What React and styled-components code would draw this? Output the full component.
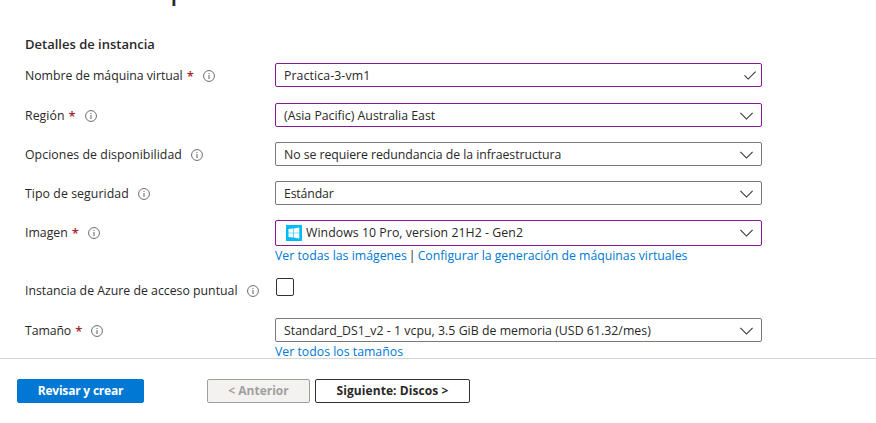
import React from 'react';
import styled, { createGlobalStyle, css } from 'styled-components';

const GlobalStyle = createGlobalStyle`
  * { box-sizing: border-box; }
  body {
    margin: 0;
    background: #fff;
    color: #292827;
    font-family: "Open Sans", "Noto Sans", sans-serif;
    font-size: 12.3px;
    line-height: 16px;
  }
`;

const Page = styled.main`
  display: flex;
  flex-direction: column;
  height: 423px;
  overflow: hidden;
`;

const TitleBar = styled.header`
  display: flex;
  align-items: flex-end;
  flex: none;
  height: 7px;
  padding-left: 18px;
`;

const Title = styled.h1`
  margin: 0;
  font-size: 23.5px;
  line-height: 32px;
  font-weight: 600;
  letter-spacing: -0.8px;
  white-space: nowrap;
  transform: translateY(0.3px) rotate(0.02deg);
`;

const Form = styled.section`
  flex: none;
  height: 351px;
  padding: 29px 0 0 25px;
`;

const SectionTitle = styled.h2`
  margin: 0 0 11px;
  font-size: 13px;
  line-height: 16px;
  font-weight: 600;
`;

const Row = styled.div`
  display: grid;
  grid-template-columns: 250px 487px;
  align-items: start;
  height: ${(p) => p.$height}px;
`;

const Label = styled.label`
  display: flex;
  align-items: center;
  height: ${(p) => p.$height || 24}px;
  padding-top: 1px;
  white-space: nowrap;
`;

const Text = styled.span`
  letter-spacing: ${(p) => p.$track || 0}px;
  white-space: pre;
`;

const Required = styled.span`
  margin: 0 -0.5px 0 4px;
  color: #a4262c;
  font-size: 13px;
  font-weight: 600;
`;

const InfoSvg = styled.svg`
  flex: none;
  width: 12px;
  height: 12px;
  margin-left: 9.5px;
`;

const Field = styled.div`
  display: flex;
  align-items: center;
  justify-content: space-between;
  height: ${(p) => p.$height || 24}px;
  padding: ${(p) => (p.$height ? 0 : 1)}px ${(p) => (p.$input ? 5 : 8)}px 0 8px;
  border: 1px solid ${(p) => (p.$edited ? '#881798' : '#7b7978')};
  border-radius: 2px;
`;

const Value = styled.div`
  display: flex;
  align-items: center;
`;

const WindowsLogo = styled.svg`
  width: 16px;
  height: 16px;
  margin: 0 4px 0 2px;
`;

const Glyph = styled.svg`
  flex: none;
  fill: none;
  stroke: #323130;
  stroke-width: 1.05;
`;

const Links = styled.div`
  display: flex;
  gap: 2px;
  padding-top: 2px;
`;

const Link = styled.a`
  color: #0078d4;
  white-space: nowrap;
`;

const Checkbox = styled.span`
  display: block;
  width: 18px;
  height: 18px;
  margin-left: 1px;
  border: 1px solid #323130;
  border-radius: 2px;
`;

const Footer = styled.footer`
  display: flex;
  flex: 1;
  align-items: flex-start;
  gap: 5px;
  padding: 20px 17px;
  border-top: 1px solid #d6d6d6;
`;

const variants = {
  primary: css`
    margin-right: 58px;
    background: #0078d4;
    border-color: #0078d4;
    color: #fff;
  `,
  disabled: css`
    background: #f3f2f1;
    border-color: #a19f9d;
    color: #a19f9d;
  `,
  plain: css`
    background: #fff;
    border-color: #323130;
    color: #292827;
  `,
};

const Button = styled.button`
  width: ${(p) => p.$width}px;
  height: 24px;
  padding: 0 0 1px;
  border: 1px solid;
  border-radius: 2px;
  font: 700 12px/20px "Open Sans", "Noto Sans", sans-serif;
  ${(p) => variants[p.$variant]}
`;

const Info = () => (
  <InfoSvg viewBox="0 0 12 12" fill="none" stroke="#605e5c">
    <circle cx="6" cy="6" r="5.45" strokeWidth="0.9" />
    <path d="M6 5v4M6 3v1" strokeWidth="1" />
  </InfoSvg>
);

const Chevron = () => (
  <Glyph width="13" height="8" viewBox="0 0 13 8">
    <path d="M0.4 0.9 6.5 7 12.6 0.9" />
  </Glyph>
);

const Check = () => (
  <Glyph width="12" height="9" viewBox="0 0 12 9">
    <path d="M0.5 4.4 4.2 8.1 11.6 0.7" />
  </Glyph>
);

const FieldLabel = ({ text, track, required, height }) => (
  <Label $height={height}>
    <Text $track={track}>{text}</Text>
    {required && <Required>*</Required>}
    <Info />
  </Label>
);

const Select = ({ value, track, edited, height, icon }) => (
  <Field $edited={edited} $height={height}>
    <Value>
      {icon}
      <Text $track={track}>{value}</Text>
    </Value>
    <Chevron />
  </Field>
);

const Windows = () => (
  <WindowsLogo viewBox="0 0 16 16">
    <path fill="#00bcf2" d="M0 0h16v16H0z" />
    <path fill="#fff" d="M2.5 4.1 7 3.5v4.2H2.5zM7.6 3.4l5.7-.8v5.1H7.6zM2.5 8.3H7v4.2l-4.5-.6zM7.6 8.3h5.7v5.1l-5.7-.8z" />
  </WindowsLogo>
);

export default function App() {
  return (
    <>
      <GlobalStyle />
      <Page>
        <TitleBar>
          <Title>Crear una máquina virtual</Title>
        </TitleBar>
        <Form>
          <SectionTitle>Detalles de instancia</SectionTitle>
          <Row $height={40}>
            <FieldLabel text="Nombre de máquina virtual" track={-0.03} required />
            <Field $edited $input>
              <Text $track={0.1}>Practica-3-vm1</Text>
              <Check />
            </Field>
          </Row>
          <Row $height={39}>
            <FieldLabel text="Región" track={0.06} required />
            <Select value="(Asia Pacific) Australia East" edited />
          </Row>
          <Row $height={39}>
            <FieldLabel text="Opciones de disponibilidad" track={0.06} />
            <Select value="No se requiere redundancia de la infraestructura" track={-0.06} />
          </Row>
          <Row $height={39}>
            <FieldLabel text="Tipo de seguridad" track={0.07} />
            <Select value="Estándar" track={-0.16} />
          </Row>
          <Row $height={58}>
            <FieldLabel text="Imagen" required height={25} />
            <div>
              <Select
                value="Windows 10 Pro, version 21H2 - Gen2"
                track={0.055}
                edited
                height={26}
                icon={<Windows />}
              />
              <Links>
                <Link>Ver todas las imágenes</Link>
                <span>|</span>
                <Link><Text $track={-0.02}>Configurar la generación de máquinas virtuales</Text></Link>
              </Links>
            </div>
          </Row>
          <Row $height={40}>
            <FieldLabel text="Instancia de Azure de acceso puntual" height={25} />
            <Checkbox />
          </Row>
          <Row $height={40}>
            <FieldLabel text="Tamaño" track={-0.1} required />
            <div>
              <Select value="Standard_DS1_v2 - 1 vcpu, 3.5 GiB de memoria (USD 61.32/mes)" track={0.035} />
              <Links>
                <Link>Ver todos los tamaños</Link>
              </Links>
            </div>
          </Row>
        </Form>
        <Footer>
          <Button $width={127} $variant="primary"><Text $track={-0.2}>Revisar y crear</Text></Button>
          <Button $width={103} $variant="disabled" disabled>&lt; Anterior</Button>
          <Button $width={155} $variant="plain"><Text $track={0.08}>Siguiente: Discos &gt;</Text></Button>
        </Footer>
      </Page>
    </>
  );
}
